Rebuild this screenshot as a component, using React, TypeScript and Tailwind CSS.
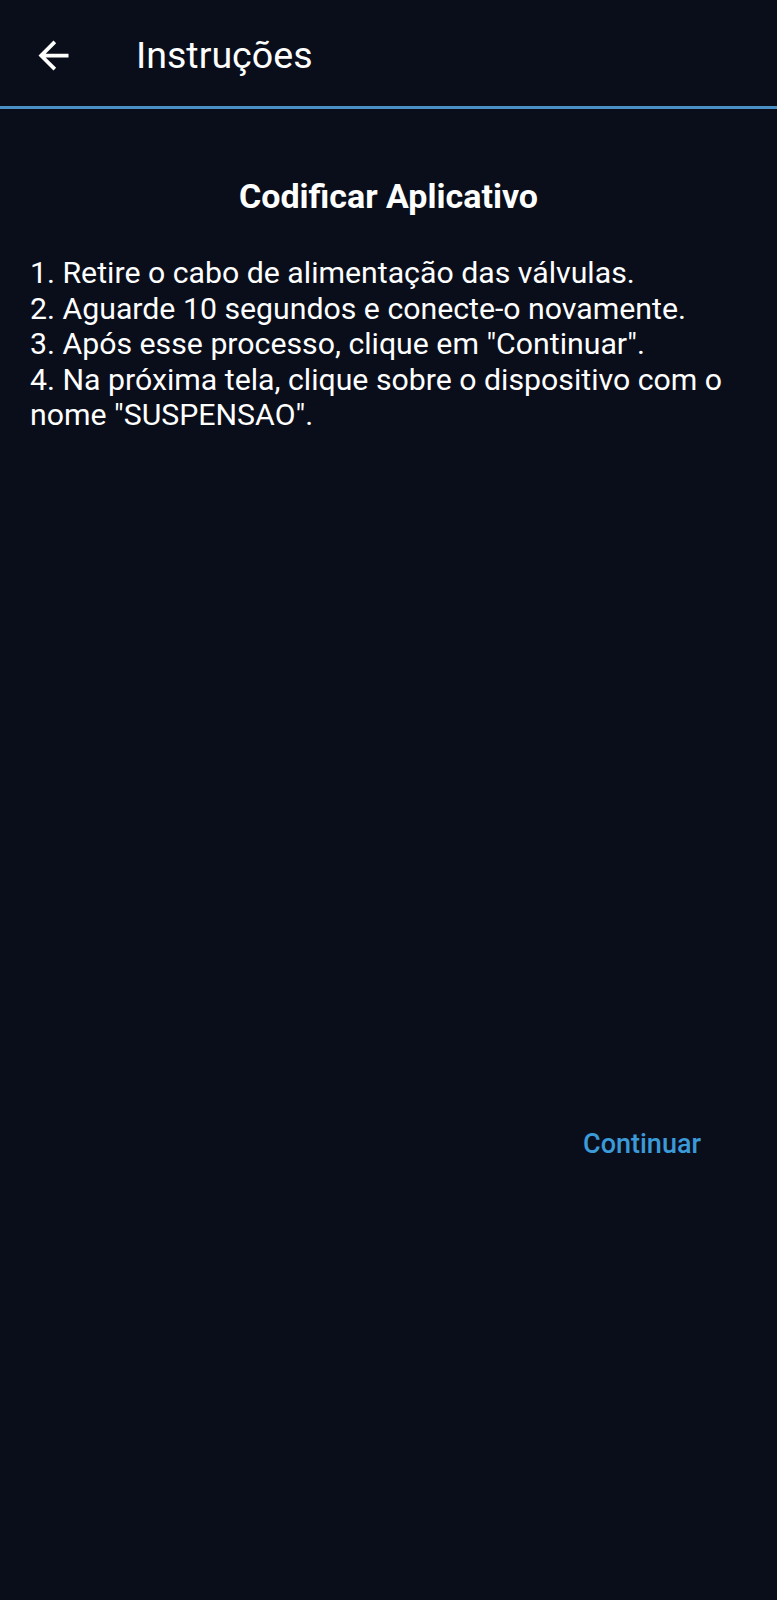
import React from 'react';

const STEPS = [
  '1. Retire o cabo de alimentação das válvulas.',
  '2. Aguarde 10 segundos e conecte-o novamente.',
  '3. Após esse processo, clique em "Continuar".',
  '4. Na próxima tela, clique sobre o dispositivo com o nome "SUSPENSAO".',
];

/** Material-style back arrow, filled. */
function BackArrow() {
  return (
    <svg width="45" height="45" viewBox="0 0 24 24" fill="white" aria-hidden>
      <path d="M20 11H7.83l5.59-5.59L12 4l-8 8 8 8 1.41-1.41L7.83 13H20v-2z" />
    </svg>
  );
}

export default function App() {
  return (
    <div className="min-h-[1600px] w-full bg-[#0a0e1b] font-['Roboto',sans-serif] text-white">
      <header className="flex h-[109px] items-center border-b-[3px] border-[#4a90c4] pt-[4px]">
        <button type="button" className="ml-[31px] flex items-center">
          <BackArrow />
        </button>
        <h1 className="ml-[60px] text-[37.6px] leading-[44px] font-normal">Instruções</h1>
      </header>

      <main className="flex flex-col">
        <h2 className="mt-[67px] text-center text-[34px] leading-[40px] font-bold">
          Codificar Aplicativo
        </h2>
        <div className="mt-[39px] pr-[30px] pl-[30px] text-[30.25px] leading-[35.6px]">
          {STEPS.map((step) => (
            <p key={step}>{step}</p>
          ))}
        </div>
        <div className="mt-[695px] flex justify-end pr-[76px]">
          <button
            type="button"
            className="text-[27px] leading-[32px] font-medium text-[#3b9ad8]"
          >
            Continuar
          </button>
        </div>
      </main>
    </div>
  );
}
